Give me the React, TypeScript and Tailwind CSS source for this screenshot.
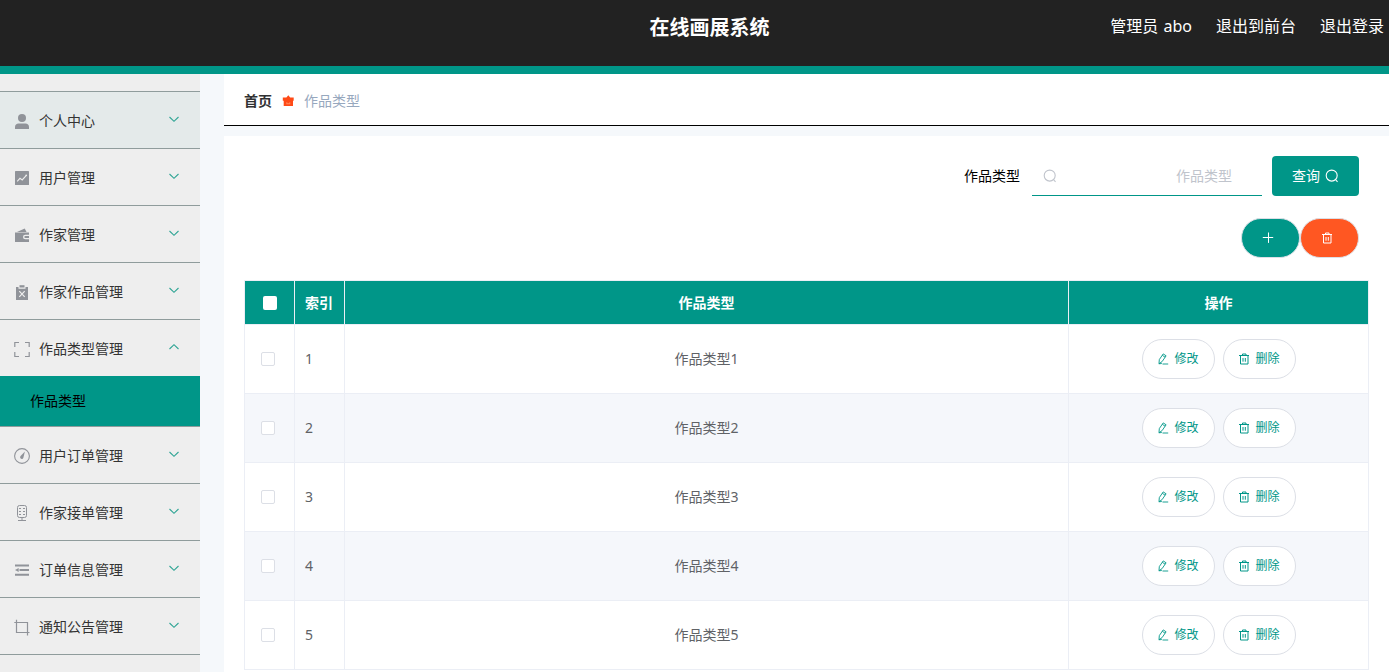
import { clsx } from 'clsx';
import type { ReactNode } from 'react';

interface MenuItem {
  title: string;
  icon: ReactNode;
  hovered?: boolean;
  children?: string[];
}

const menus: MenuItem[] = [
  {
    title: '个人中心',
    hovered: true,
    icon: (
      <g fill="currentColor">
        <circle cx="9" cy="6" r="4" />
        <path d="M2 17v-2.2C2 12.700 3.500 11.400 5.500 11.400h7c2 0 3.500 1.300 3.500 3.400V17z" />
      </g>
    ),
  },
  {
    title: '用户管理',
    icon: (
      <>
        <rect x="2" y="2" width="14" height="14" rx=".6" fill="currentColor" />
        <path d="M4.200 12.400 7 9.300l2.200 1.600 3.700-4.100" fill="none" stroke="#eee" strokeWidth="1.100" />
        <circle cx="13.200" cy="6.300" r=".9" fill="#eee" />
      </>
    ),
  },
  {
    title: '作家管理',
    icon: (
      <>
        <path d="M2 6.500h14V16H2z" fill="currentColor" />
        <path d="M4 6 11.700 2.600l1.800 3.400z" fill="currentColor" />
        <path d="M16.200 8.800h-4a2.200 2.200 0 0 0 0 4.400h4z" fill="#eee" />
        <path d="M16 10h-3.700a1 1 0 0 0 0 2H16z" fill="currentColor" />
      </>
    ),
  },
  {
    title: '作家作品管理',
    icon: (
      <>
        <path d="M3 4h2.500v1.700h7V4H15v13H3z" fill="currentColor" />
        <path d="M6.500 2.200h5v2.300h-5z" fill="currentColor" />
        <path d="m6.300 8.100 5.400 5.800m0-5.800-5.400 5.800" stroke="#eee" strokeWidth="1.200" />
      </>
    ),
  },
  {
    title: '作品类型管理',
    children: ['作品类型'],
    icon: (
      <path
        d="M6 2.500H1.800V7M12 2.500h4.200V7M6 16.500H1.800V12M12 16.500h4.200V12"
        fill="none"
        stroke="currentColor"
        strokeWidth="1.200"
      />
    ),
  },
  {
    title: '用户订单管理',
    icon: (
      <>
        <circle cx="9" cy="9" r="7.400" fill="none" stroke="currentColor" strokeWidth="1.100" />
        <path d="M11.900 4.500 10.500 10.300a1.700 1.700 0 1 1-2.900-1.300z" fill="currentColor" />
      </>
    ),
  },
  {
    title: '作家接单管理',
    icon: (
      <g fill="none" stroke="currentColor">
        <rect x="4.500" y="1.500" width="9" height="12" rx="2" />
        <path d="M6 4.500h2M10 4.500h2M6 7.500h2M10 7.500h2M6 10.500h2M10 10.500h2M9 13.500v3M5 16.500h8" />
      </g>
    ),
  },
  {
    title: '订单信息管理',
    icon: (
      <g fill="currentColor">
        <path d="M2 3.400h14v2H2zM6.500 8h9.500v2H6.500zM2 12.800h14v2H2z" />
        <path d="m2 9 3.700-2v4z" />
      </g>
    ),
  },
  {
    title: '通知公告管理',
    icon: (
      <path
        d="M3.500 1.700v12.800h13M1.300 4.500h13.200v13"
        fill="none"
        stroke="currentColor"
        strokeWidth="1.200"
      />
    ),
  },
];

const rows = ['作品类型1', '作品类型2', '作品类型3', '作品类型4', '作品类型5'];

function Chevron({ up }: { up?: boolean }) {
  return (
    <svg viewBox="0 0 12 12" className={clsx('h-3 w-3 text-[#2fa595]', up ? 'mb-0.5 rotate-180' : 'mb-[3px]')}>
      <path d="m1.500 4 4.500 4.300L10.500 4" fill="none" stroke="currentColor" strokeWidth="1.100" />
    </svg>
  );
}

function SearchIcon({ className }: { className?: string }) {
  return (
    <svg viewBox="0 0 14 14" className={clsx('h-3.5 w-3.5 shrink-0', className)}>
      <circle cx="6.700" cy="6.600" r="5.500" fill="none" stroke="currentColor" strokeWidth="1.100" />
      <path d="m10.500 10.500 2 2.300" stroke="currentColor" strokeWidth="1.100" />
    </svg>
  );
}

function TrashIcon() {
  return (
    <svg viewBox="0 0 12 12" className="h-3 w-3 shrink-0" fill="none" stroke="currentColor" strokeWidth="1">
      <path d="M1 2.500h10M2.500 2.500v8.500h7.500V2.500M4.500 2.500V1h3.500v1.500M5 5v3.700M7.300 5v3.700" />
    </svg>
  );
}

function EditIcon() {
  return (
    <svg viewBox="0 0 12 12" className="h-3 w-3 shrink-0" fill="none" stroke="currentColor" strokeWidth=".9">
      <path d="m2.300 6.600 3.900-5.700 2.900 1.900-4 5.800-3.100 2.100zM5.300 2.300l2.800 1.900M1.800 10.800l3-.3M5.500 11h5.700" />
    </svg>
  );
}

function RowButton({ icon, children }: { icon: ReactNode; children: ReactNode }) {
  return (
    <button className="flex h-10 w-[73px] items-center justify-center gap-[5px] rounded-full border border-[#dcdfe6] bg-white text-xs text-[#009688]">
      {icon}
      <span>{children}</span>
    </button>
  );
}

function Header() {
  return (
    <header className="grid h-[74px] shrink-0 grid-cols-3 border-b-8 border-[#009688] bg-[#222] text-white">
      <h1 className="col-start-2 pl-[30px] text-center text-xl leading-[55px] font-bold">在线画展系统</h1>
      <nav className="flex justify-end gap-6 pr-[5px] text-base leading-[53px] whitespace-nowrap">
        <span className="[word-spacing:1px]">管理员 abo</span>
        <span>退出到前台</span>
        <span>退出登录</span>
      </nav>
    </header>
  );
}

function Sidebar() {
  return (
    <aside className="w-[200px] shrink-0 bg-[#eee] pt-[17px] text-sm text-[#333]">
      <ul className="border-t border-[#8f9c9c]">
        {menus.map((menu) => (
          <li key={menu.title} className="border-b border-[#8f9c9c]">
            <div
              className={clsx(
                'flex h-14 items-center pr-5 pl-[13px]',
                menu.hovered && 'bg-[#e4eaea]'
              )}
            >
              <svg viewBox="0 0 18 18" className="mt-0.5 mr-2 h-[18px] w-[18px] text-[#909399]">
                {menu.icon}
              </svg>
              <span className="flex-1 pt-px">{menu.title}</span>
              <Chevron up={!!menu.children} />
            </div>
            {menu.children?.map((child) => (
              <div key={child} className="h-[50px] bg-[#009688] pl-[30px] leading-[50px] text-black">
                {child}
              </div>
            ))}
          </li>
        ))}
      </ul>
    </aside>
  );
}

function Breadcrumb() {
  return (
    <div className="flex h-13 shrink-0 items-center border-b border-black bg-white pt-0.5 pl-5 text-sm">
      <span className="font-semibold text-[#303133]">首页</span>
      <svg viewBox="0 0 12 12" className="mx-[10px] h-3 w-3 text-[#ff4a17]" fill="currentColor">
        <path d="M.8 2.600h3.600L6.300.2l1.900 2.400h3.500v3.200H.8zM1.700 5.500h9.300V11H1.700z" />
        <path d="M4.300 7.200h1v1h2v-1h1v2h-4z" fill="#ff8a5c" />
      </svg>
      <span className="text-[#97a8be]">作品类型</span>
    </div>
  );
}

function Toolbar() {
  return (
    <>
      <div className="flex h-10 items-center justify-end pr-[30px] text-sm">
        <label className="mr-3 text-black">作品类型</label>
        <div className="mr-2.5 flex h-10 w-[230px] items-center justify-between border-b border-[#009688] pr-[30px] pl-[11px] text-[#c0c4cc]">
          <SearchIcon />
          <span>作品类型</span>
        </div>
        <button className="flex h-10 w-[87px] items-center justify-center gap-[5px] rounded bg-[#009688] text-white">
          查询
          <SearchIcon />
        </button>
      </div>
      <div className="mt-[22px] flex justify-end pr-[30px]">
        <button className="flex h-10 w-[59px] items-center justify-center rounded-full border border-[#dcdfe6] bg-[#009688] pr-[5px] text-white">
          <svg viewBox="0 0 12 12" className="h-3 w-3" stroke="currentColor" strokeWidth="1">
            <path d="M.8 5.500h10.400M6.500.5v10.400" />
          </svg>
        </button>
        <button className="flex h-10 w-[59px] items-center justify-center rounded-full border border-[#dcdfe6] bg-[#ff5722] pr-[5px] text-white">
          <TrashIcon />
        </button>
      </div>
    </>
  );
}

function TypeTable() {
  const th = 'border-r border-b border-[#ebeef5] bg-[#009688] font-bold text-white';
  const td = 'border-r border-b border-[#ebeef5]';

  return (
    <table className="mt-[22px] w-[1125px] table-fixed border-separate border-spacing-0 border-t border-l border-[#ebeef5] text-sm text-[#606266]">
      <colgroup>
        <col className="w-[50px]" />
        <col className="w-[50px]" />
        <col />
        <col className="w-[300px]" />
      </colgroup>
      <thead>
        <tr className="h-11">
          <th className={th}>
            <div className="ml-[18px] h-3.5 w-3.5 rounded-xs bg-white" />
          </th>
          <th className={clsx(th, 'pl-2.5 text-left')}>索引</th>
          <th className={th}>作品类型</th>
          <th className={th}>操作</th>
        </tr>
      </thead>
      <tbody>
        {rows.map((name, i) => (
          <tr key={name} className={clsx('h-[69px]', i % 2 === 1 && 'bg-[#f5f7fb]')}>
            <td className={td}>
              <div className="ml-4 h-3.5 w-3.5 rounded-xs border border-[#dcdfe6] bg-white" />
            </td>
            <td className={clsx(td, 'pl-2.5')}>{i + 1}</td>
            <td className={clsx(td, 'text-center')}>{name}</td>
            <td className={td}>
              <div className="flex justify-center gap-2">
                <RowButton icon={<EditIcon />}>修改</RowButton>
                <RowButton icon={<TrashIcon />}>删除</RowButton>
              </div>
            </td>
          </tr>
        ))}
      </tbody>
    </table>
  );
}

export default function App() {
  return (
    <div className="flex h-[672px] w-[1389px] flex-col overflow-hidden bg-[#f5f8fb] font-['Noto_Sans','Noto_Sans_CJK_SC',sans-serif]">
      <Header />
      <div className="flex min-h-0 flex-1">
        <Sidebar />
        <main className="ml-6 flex flex-1 flex-col">
          <Breadcrumb />
          <section className="mt-2.5 min-h-0 flex-1 bg-white pt-5 pl-5">
            <Toolbar />
            <TypeTable />
          </section>
        </main>
      </div>
    </div>
  );
}
